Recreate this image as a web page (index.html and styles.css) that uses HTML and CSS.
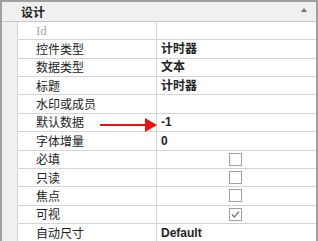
FILE: index.html
```html
<!DOCTYPE html>
<html>
<head>
<meta charset="utf-8">
<link rel="stylesheet" href="styles.css">
</head>
<body>
<div class="frame">
  <div class="header">
    <span class="title">设计</span>
    <span class="collapse"></span>
  </div>
  <div class="grid">
    <div class="row"><div class="gutter"></div><div class="label dim">Id</div><div class="value"></div></div>
    <div class="row"><div class="gutter"></div><div class="label">控件类型</div><div class="value">计时器</div></div>
    <div class="row"><div class="gutter"></div><div class="label">数据类型</div><div class="value">文本</div></div>
    <div class="row"><div class="gutter"></div><div class="label">标题</div><div class="value">计时器</div></div>
    <div class="row"><div class="gutter"></div><div class="label">水印或成员</div><div class="value"></div></div>
    <div class="row"><div class="gutter"></div><div class="label">默认数据</div><div class="value">-1</div></div>
    <div class="row"><div class="gutter"></div><div class="label">字体增量</div><div class="value">0</div></div>
    <div class="row"><div class="gutter"></div><div class="label">必填</div><div class="value center"><span class="box"></span></div></div>
    <div class="row"><div class="gutter"></div><div class="label">只读</div><div class="value center"><span class="box"></span></div></div>
    <div class="row"><div class="gutter"></div><div class="label">焦点</div><div class="value center"><span class="box"></span></div></div>
    <div class="row"><div class="gutter"></div><div class="label">可视</div><div class="value center"><span class="box"><svg width="11" height="11" viewBox="0 0 11 11"><path d="M2 5.5 L4.3 8 L9 2.5" fill="none" stroke="#7a7a7a" stroke-width="1.3"/></svg></span></div></div>
    <div class="row"><div class="gutter"></div><div class="label">自动尺寸</div><div class="value">Default</div></div>
  </div>
  <svg class="arrow" width="60" height="16" viewBox="0 0 60 16"><path d="M0 8 H46" stroke="#ee1111" stroke-width="2"/><path d="M45 1 L57 8 L45 15 Z" fill="#ee1111"/></svg>
</div>
</body>
</html>
```
FILE: styles.css
```css
html, body { margin: 0; padding: 0; background: #fff; }
body { width: 318px; height: 241px; overflow: hidden; font-family: "Noto Sans CJK SC", "DejaVu Sans", sans-serif; font-size: 12px; color: #222; }
.frame { position: relative; width: 318px; height: 241px; box-sizing: border-box; border-top: 2px solid #a0a0a0; border-left: 2px solid #a0a0a0; border-right: 2px solid #a0a0a0; background: #f0f0f0; }
.header { height: 19px; display: flex; align-items: center; justify-content: space-between; padding: 0 9px 0 19px; box-sizing: border-box; }
.title { font-weight: 700; font-size: 12px; line-height: 19px; color: #222; }
.collapse { width: 0; height: 0; border-left: 3px solid transparent; border-right: 3px solid transparent; border-bottom: 4px solid #707070; margin-top: -3px; }
.grid { border-top: 1px solid #c8c8c8; }
.row { display: flex; height: 18.36px; }
.gutter { width: 15px; flex: none; background: #f0f0f0; }
.label { width: 140px; flex: none; box-sizing: border-box; border-left: 1px solid #d4d4d4; border-right: 1px solid #d4d4d4; border-bottom: 1px solid #d4d4d4; background: #fff; padding-left: 18px; display: flex; align-items: center; line-height: 1; color: #222; }
.label.dim { color: #a8a8a8; font-family: "Liberation Serif", serif; font-size: 13px; }
.value { flex: 1; box-sizing: border-box; border-bottom: 1px solid #d4d4d4; background: #fff; padding-left: 4px; display: flex; align-items: center; font-weight: 700; font-family: "Liberation Sans", "Noto Sans CJK SC", sans-serif; font-size: 12px; line-height: 1; color: #222; }
.value.center { justify-content: center; padding-left: 0; padding-right: 2px; }
.box { width: 13px; height: 13px; box-sizing: border-box; border: 1px solid #a0a0a0; background: #fff; display: flex; align-items: center; justify-content: center; }
.arrow { position: absolute; left: 98px; top: 115px; }
```
